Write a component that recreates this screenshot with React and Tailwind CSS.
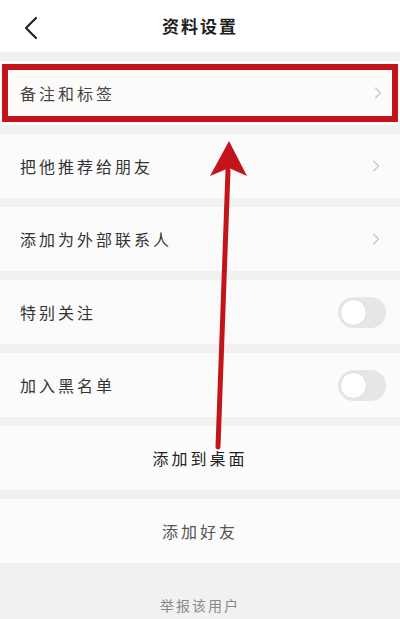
import { ChevronRight } from 'lucide-react'

const font = { fontFamily: '"Noto Sans CJK SC", "Noto Sans", sans-serif' }

function Toggle() {
  return (
    <div className="flex h-[31px] w-[48px] items-center rounded-full bg-[#e6e6e6] p-[2px]">
      <div className="h-[27px] w-[27px] rounded-full border border-[#dcdcdc] bg-white" />
    </div>
  )
}

function Row({ label, right }) {
  return (
    <div className="flex h-[64px] items-center justify-between bg-[#fbfbfb] pl-[20px] pr-[14px]">
      <span className="text-[16px] tracking-[3px] text-[#333]">{label}</span>
      {right}
    </div>
  )
}

const chevron = <ChevronRight size={20} strokeWidth={1.3} className="text-[#c4c4c4]" />

export default function App() {
  return (
    <div className="relative h-[619px] w-[400px] overflow-hidden bg-[#f1f1f1]" style={font}>
      <header className="flex h-[52px] items-center justify-center bg-white">
        <svg className="absolute left-[22px] top-[16px]" width="18" height="24" viewBox="0 0 18 24" fill="none">
          <path d="M14 2 L4 12 L14 22" stroke="#222" strokeWidth="2.2" strokeLinecap="round" strokeLinejoin="round" />
        </svg>
        <h1 className="text-[17px] font-bold tracking-[2px] text-[#222]">资料设置</h1>
      </header>

      <div className="mt-[9px] flex flex-col gap-[9px]">
        <div className="bg-[#fbfbfb] px-[2px] py-[3px]">
          <div className="flex h-[58px] items-center justify-between border-[6px] border-[#c2141a] bg-[#fdfbf9] pl-[12px] pr-[4px]">
            <span className="text-[16px] tracking-[3px] text-[#444]">备注和标签</span>
            {chevron}
          </div>
        </div>
        <Row label="把他推荐给朋友" right={chevron} />
        <Row label="添加为外部联系人" right={chevron} />
        <Row label="特别关注" right={<Toggle />} />
        <Row label="加入黑名单" right={<Toggle />} />
        <div className="flex h-[64px] items-center justify-center bg-[#fbfbfb]">
          <span className="text-[16px] tracking-[3px] text-[#222]">添加到桌面</span>
        </div>
        <div className="flex h-[64px] items-center justify-center bg-[#fbfbfb]">
          <span className="text-[16px] tracking-[3px] text-[#555]">添加好友</span>
        </div>
        <div className="flex h-[46px] items-start justify-center pt-[23px]">
          <span className="text-[14px] leading-[20px] tracking-[2px] text-[#888]">举报该用户</span>
        </div>
      </div>

      <svg className="pointer-events-none absolute left-0 top-0" width="400" height="619" viewBox="0 0 400 619">
        <line x1="228" y1="170" x2="218" y2="447" stroke="#c2141a" strokeWidth="5" strokeLinecap="round" />
        <path d="M229 141 L247 176 L229 168 L210 176 Z" fill="#c2141a" />
      </svg>
    </div>
  )
}
